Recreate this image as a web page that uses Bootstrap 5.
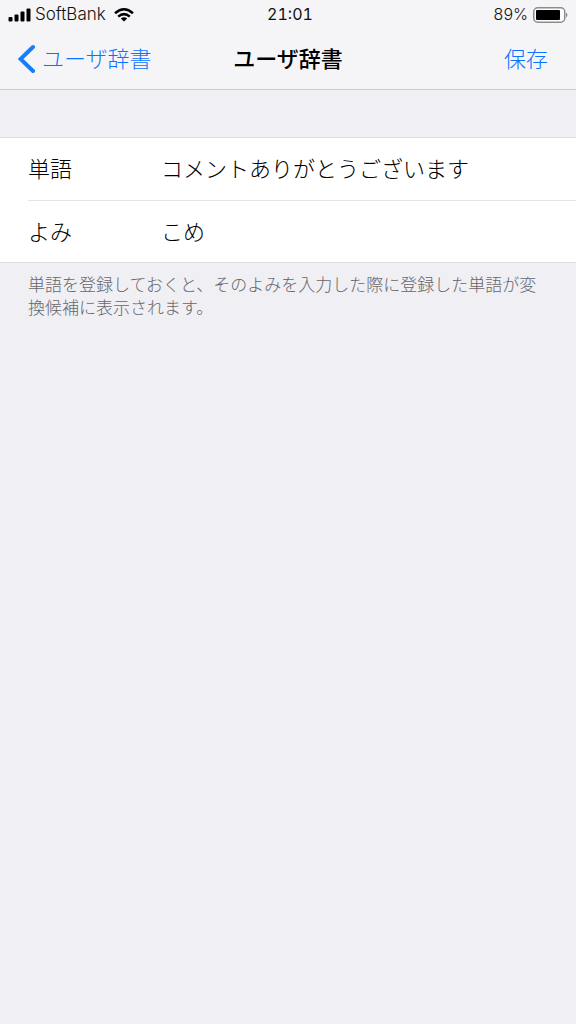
<!DOCTYPE html>
<html lang="ja">
<head>
<meta charset="utf-8">
<meta name="viewport" content="width=device-width, initial-scale=1">
<title>ユーザ辞書</title>
<link href="https://cdn.jsdelivr.net/npm/bootstrap@5.3.0/dist/css/bootstrap.min.css" rel="stylesheet">
<style>
body { background: #efeff4; color: #000; font-family: "Noto Sans CJK JP", sans-serif; font-weight: 300; }
.top-area { background: #f5f5f7; border-bottom: 1px solid #cacace; }
.status-bar { height: 29px; padding: 0 4px 0 8px; font: 400 16px/29px Inter, sans-serif; color: #111; }
.status-bar time { font-variant-numeric: tabular-nums; }
.carrier { font-size: 17px; }
.carrier, .charge { font-weight: 300; }
.title-bar { height: 60px; padding: 0 18px 4px; font-size: 22px; line-height: 32px; }
.title-bar h1 { font-size: 22px; line-height: 32px; font-weight: 500; }
.title-bar a, .title-bar button { color: #0a74ff; }
.title-bar button { margin-right: 10px; font-size: 22px; line-height: 32px; font-weight: 300; }
.entry-form { margin-top: 47px; background: #fff; border: solid #dddde2; border-width: 1px 0; padding-left: 28px; }
.entry-row { height: 62px; padding-bottom: 4px; font-size: 22px; line-height: 32px; }
.entry-row + .entry-row { border-top: 1px solid #e5e5e8; }
.entry-row label { width: 133px; }
.entry-row input { color: #000; font-size: 22px; line-height: 32px; font-weight: 300; }
.entry-note { padding: 9px 28px; color: #66666b; font-size: 17px; line-height: 23px; }
</style>
</head>
<body>
<header class="top-area">
  <div class="status-bar row g-0 align-items-center">
    <div class="col d-flex align-items-center">
      <svg width="23" height="14" viewBox="0 0 23 14" aria-hidden="true"><rect x="0.5" y="9" width="4" height="4.500" rx="1"/><rect x="6.500" y="6.500" width="4" height="7" rx="1"/><rect x="12.500" y="3.500" width="4" height="10" rx="1"/><rect x="18.500" y="0.500" width="4" height="13" rx="1"/></svg>
      <span class="carrier ms-1">SoftBank</span>
      <svg class="ms-2" width="20" height="14" viewBox="0 0 20 14" fill="none" stroke="#000" stroke-width="2.500" aria-hidden="true"><path d="M1 5.200Q10-2.600 19 5.200M4.200 8.600Q10 3.600 15.800 8.600"/><path d="M10 13.500L6.800 10.500Q10 8 13.200 10.500Z" fill="#000" stroke="none"/></svg>
    </div>
    <time class="col-auto">21:01</time>
    <div class="col d-flex align-items-center justify-content-end">
      <span class="charge me-1">89%</span>
      <svg class="me-1" width="36" height="16" viewBox="0 0 36 16" aria-hidden="true"><rect x="1.750" y="0.750" width="31" height="14.500" rx="4" fill="#fcfcfc" stroke="#8c8c8c" stroke-width="1.500"/><rect x="4" y="3" width="24" height="10" rx="1"/><path d="M34 5.500Q37 8 34 10.500Z" fill="#8c8c8c"/></svg>
    </div>
  </div>
  <nav class="title-bar row g-0 align-items-center">
    <div class="col"><a href="#" class="d-flex align-items-center text-decoration-none text-nowrap"><svg class="me-1 mt-1" width="20" height="30" viewBox="0 0 20 30" fill="none" stroke="#157efb" stroke-width="4" stroke-linecap="round" aria-hidden="true"><path d="M15 3L2.500 15L15 27"/></svg>ユーザ辞書</a></div>
    <h1 class="col-auto m-0">ユーザ辞書</h1>
    <div class="col text-end"><button type="submit" form="entry" class="border-0 bg-transparent p-0">保存</button></div>
  </nav>
</header>
<main>
  <form id="entry" class="entry-form">
    <div class="entry-row d-flex align-items-center">
      <label for="word">単語</label>
      <input id="word" type="text" class="flex-grow-1 border-0 bg-transparent p-0" value="コメントありがとうございます">
    </div>
    <div class="entry-row d-flex align-items-center">
      <label for="reading">よみ</label>
      <input id="reading" type="text" class="flex-grow-1 border-0 bg-transparent p-0" value="こめ">
    </div>
  </form>
  <p class="entry-note m-0">単語を登録しておくと、そのよみを入力した際に登録した単語が変換候補に表示されます。</p>
</main>
<script src="https://cdn.jsdelivr.net/npm/bootstrap@5.3.0/dist/js/bootstrap.bundle.min.js"></script>
</body>
</html>
